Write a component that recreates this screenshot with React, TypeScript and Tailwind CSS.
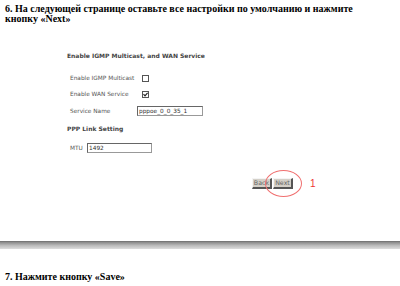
import React from "react";

const serif = { fontFamily: '"Liberation Serif", "Times New Roman", serif' };
const ui = { fontFamily: '"DejaVu Sans", Tahoma, sans-serif' };

function Checkbox({ checked }: { checked?: boolean }) {
  return (
    <span className="inline-flex w-[7px] h-[7px] border border-[#555] bg-white items-center justify-center">
      {checked && (
        <svg width="5" height="5" viewBox="0 0 5 5">
          <path d="M0.5 2.2 L2 3.8 L4.6 0.8" stroke="#222" strokeWidth="1.2" fill="none" />
        </svg>
      )}
    </span>
  );
}

function Btn({ children }: { children: React.ReactNode }) {
  return (
    <div className="h-[11px] w-[20px] flex items-center justify-center bg-[#d4d0c8] border-t border-l border-t-[#f4f4f4] border-l-[#f4f4f4] border-b-2 border-r-2 border-b-[#555] border-r-[#555] text-[#666] text-[6.3px] leading-none" style={ui}>
      {children}
    </div>
  );
}

export default function App() {
  return (
    <div className="w-[400px] h-[286px] bg-white overflow-hidden relative">
      <div className="pt-[4px] pl-[5px] text-[10px] leading-[10px] font-bold text-black" style={serif}>
        6. На следующей странице оставьте все настройки по умолчанию и нажмите
        <br />
        кнопку «Next»
      </div>

      <div className="ml-[67px] mt-[28px] text-[#555]" style={ui}>
        <div className="font-bold text-[6px] leading-[8px] text-[#444]">Enable IGMP Multicast, and WAN Service</div>
        <div className="ml-[3px] mt-[14px] flex flex-col gap-[8px] text-[5.8px] leading-[8px]">
          <div className="flex items-center">
            <span className="w-[72px]">Enable IGMP Multicast</span>
            <Checkbox />
          </div>
          <div className="flex items-center">
            <span className="w-[72px]">Enable WAN Service</span>
            <Checkbox checked />
          </div>
          <div className="flex items-center">
            <span className="w-[67px]">Service Name</span>
            <span className="w-[66px] h-[10px] border border-[#999] border-t-[#666] border-l-[#666] flex items-center pl-[1px] text-[#333]">pppoe_0_0_35_1</span>
          </div>
        </div>
        <div className="font-bold text-[6px] leading-[8px] text-[#444] mt-[9px]">PPP Link Setting</div>
        <div className="ml-[3px] mt-[10px] flex items-center text-[5.8px] leading-[8px]">
          <span className="w-[17px]">MTU</span>
          <span className="w-[65px] h-[10px] border border-[#999] border-t-[#666] border-l-[#666] flex items-center pl-[1px] text-[#333]">1492</span>
        </div>
      </div>

      <div className="ml-[252px] mt-[25px] flex items-center gap-[1px] relative">
        <Btn>Back</Btn>
        <Btn>Next</Btn>
        <div className="absolute left-[13px] top-[-8px] w-[37px] h-[27px] rounded-[50%] border border-[#f07070]" />
        <span className="ml-[16px] text-[#e33] text-[10px] leading-none" style={{ fontFamily: '"Liberation Sans", Arial, sans-serif' }}>1</span>
      </div>

      <div className="mt-[52px] h-[8px] bg-gradient-to-b from-[#888] via-[#bbb] to-[#ddd] border-t border-[#777]" />

      <div className="mt-[23px] pl-[5px] text-[10px] leading-[10px] font-bold text-black" style={serif}>
        7. Нажмите кнопку «Save»
      </div>
    </div>
  );
}
